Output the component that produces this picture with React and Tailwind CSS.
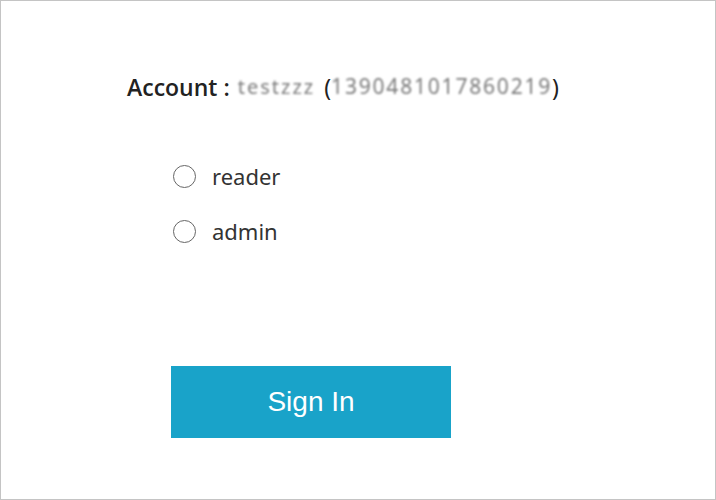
import React from "react";

export default function App() {
  return (
    <div className="w-[716px] h-[500px] bg-white border border-[#c4c4c4] font-['Noto_Sans','Open_Sans',sans-serif] text-[#333]">
      <div className="pl-[126px] pt-[68px]">
        {/* Account line */}
        <div className="flex items-center text-[23px] text-[#222] h-[36px] whitespace-nowrap">
          <span className="font-semibold font-['Open_Sans','Noto_Sans',sans-serif] text-[23px]">Account :</span>
          <span className="ml-[8px] text-[#7a7a7a] blur-[1.3px] text-[20px] tracking-[2px]">testzzz</span>
          <span className="ml-[9px]">(</span>
          <span className="text-[#7a7a7a] blur-[1.3px] text-[21px] tracking-[1.8px]">1390481017860219</span>
          <span>)</span>
        </div>

        {/* Roles */}
        <div className="ml-[46px] mt-[57px] flex flex-col gap-[27px]">
          {["reader", "admin"].map((r) => (
            <label key={r} className="flex items-center h-[28px] text-[22px] text-[#333]">
              <span className="w-[23px] h-[23px] rounded-full border-[1.5px] border-[#666] bg-white" />
              <span className="ml-[16px]">{r}</span>
            </label>
          ))}
        </div>

        {/* Sign in */}
        <button className="ml-[44px] mt-[121px] w-[280px] h-[72px] bg-[#19a3c9] text-white text-[28px] font-['Liberation_Sans',Arial,sans-serif]">
          Sign In
        </button>
      </div>
    </div>
  );
}
